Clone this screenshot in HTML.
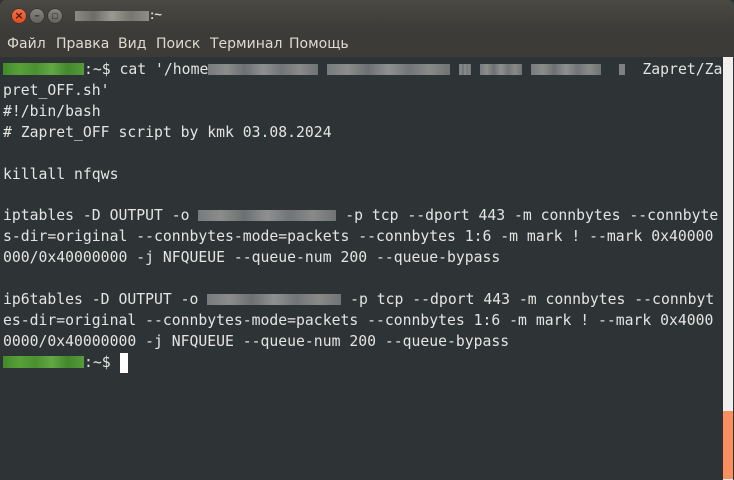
<!DOCTYPE html>
<html><head><meta charset="utf-8"><style>
html,body{margin:0;padding:0;width:734px;height:480px;overflow:hidden;background:#2e3436}
#title{position:absolute;left:0;top:0;width:734px;height:31px;background:linear-gradient(#4a4944,#3c3b37);border-radius:6px 6px 0 0}
.btn{position:absolute;top:8px;width:16px;height:16px;border-radius:50%;background:linear-gradient(#8a8984,#5f5e59);box-shadow:inset 0 0 0 1px #33322e;color:#3c3b37;font:bold 11px "DejaVu Sans",sans-serif;text-align:center;line-height:16px}
#menu{position:absolute;left:0;top:31px;width:734px;height:26px;background:#3c3b37;font:14px "DejaVu Sans","Liberation Sans",sans-serif;color:#dfdbd2}
#menu span{position:absolute;top:5px}
#term{position:absolute;left:0;top:57px;width:723px;height:423px;background:#2e3436}
pre{position:absolute;left:3px;top:3px;margin:0;font:14.75px/20.9px "DejaVu Sans Mono","Liberation Mono",monospace;color:#e4e4e2}
.bl{display:inline-block;height:11px;vertical-align:-1px;background:linear-gradient(90deg,#777b7c,#8a8d8a,#6c7072,#8e9090,#717577,#888a88,#6f7374)}
.g{display:inline-block;height:12px;vertical-align:-1px;background:linear-gradient(90deg,#3f8a2a,#58a03a,#4a9030,#62a845,#43892c,#569b3a)}
#sb{position:absolute;left:723px;top:57px;width:10px;height:423px;background:#f0efed}
#th{position:absolute;left:723px;top:411px;width:10px;height:68px;background:#f98e5f}
#cur{position:absolute;left:120px;top:353px;width:8px;height:20px;background:#fff}
</style></head><body>
<div id="title">
<div class="btn" style="left:11px;background:linear-gradient(#f4724a,#df4b1f);color:#4a1a0a">×</div>
<div class="btn" style="left:29px">–</div>
<div class="btn" style="left:47px">▫</div>
<div style="position:absolute;left:75px;top:11px;width:74px;height:10px;background:linear-gradient(90deg,#8b8a85,#6d6c67,#9a9993,#77766f,#8e8d88)"></div>
<div style="position:absolute;left:150px;top:7px;font:bold 13px 'Liberation Sans',sans-serif;color:#dfdbd2">:~</div>
</div>
<div id="menu"><span style="left:7px">Файл</span><span style="left:56px">Правка</span><span style="left:118px">Вид</span><span style="left:156px">Поиск</span><span style="left:210px">Терминал</span><span style="left:289px">Помощь</span></div>
<div id="term">
<pre><span class="g" style="width:81px"></span>:~$ cat '/home<span class="bl" style="width:110px"></span> <span class="bl" style="width:123px"></span> <span class="bl" style="width:12px"></span> <span class="bl" style="width:42px"></span> <span class="bl" style="width:70px"></span>  <span class="bl" style="width:6px"></span>  Zapret/Za
pret_OFF.sh'
#!/bin/bash
# Zapret_OFF script by kmk 03.08.2024

killall nfqws

iptables -D OUTPUT -o <span class="bl" style="width:138px"></span> -p tcp --dport 443 -m connbytes --connbyte
s-dir=original --connbytes-mode=packets --connbytes 1:6 -m mark ! --mark 0x40000
000/0x40000000 -j NFQUEUE --queue-num 200 --queue-bypass

ip6tables -D OUTPUT -o <span class="bl" style="width:134px"></span> -p tcp --dport 443 -m connbytes --connbyt
es-dir=original --connbytes-mode=packets --connbytes 1:6 -m mark ! --mark 0x4000
0000/0x40000000 -j NFQUEUE --queue-num 200 --queue-bypass
<span class="g" style="width:81px"></span>:~$ </pre>
</div>
<div id="cur"></div>
<div id="sb"></div><div id="th"></div>
</body></html>
